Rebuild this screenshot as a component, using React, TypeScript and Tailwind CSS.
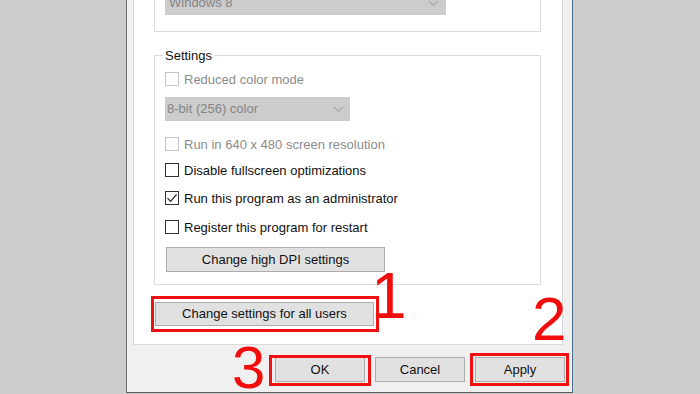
import React from 'react';

type CheckRowProps = {
  label: string;
  checked?: boolean;
  disabled?: boolean;
  className?: string;
};

const CheckRow = ({ label, checked, disabled, className }: CheckRowProps) => (
  <div className={`flex h-[14px] items-center ${className ?? ''}`}>
    <span
      className={`flex h-[14px] w-[14px] shrink-0 items-center justify-center border bg-white ${
        disabled ? 'border-[#c4c4c4]' : 'border-[#333333]'
      }`}
    >
      {checked && (
        <svg width="12" height="12" viewBox="0 0 12 12" fill="none">
          <path d="M1.5 6.2 L4.6 9.3 L10.6 2.4" stroke="#222" strokeWidth="1.2" />
        </svg>
      )}
    </span>
    <span
      className={`ml-[5px] whitespace-nowrap text-[13px] leading-none ${
        disabled ? 'text-[#8c8c8c]' : 'text-[#111]'
      }`}
    >
      {label}
    </span>
  </div>
);

const Chevron = () => (
  <svg width="11" height="7" viewBox="0 0 11 7" fill="none">
    <path d="M1 1 L5.5 5.5 L10 1" stroke="#a8a8a8" strokeWidth="1.1" />
  </svg>
);

const WinButton = ({ label, className }: { label: string; className?: string }) => (
  <div
    className={`flex items-center justify-center border border-[#adadad] bg-[#e1e1e1] text-[13px] text-[#111] ${
      className ?? ''
    }`}
  >
    {label}
  </div>
);

export default function App() {
  return (
    <div
      className="relative h-[394px] w-[700px] overflow-hidden bg-[#cdcdcd]"
      style={{ fontFamily: '"Liberation Sans", Arial, sans-serif' }}
    >
      <div className="ml-[126px] flex h-[393px] w-[447px] flex-col border-b border-l border-r border-b-[#5a5a5a] border-l-[#747474] border-r-[#4f6f8e] bg-[#f0f0f0]">
        {/* tab page */}
        <div className="ml-[6px] flex h-[345px] w-[430px] flex-col border-b border-l border-r border-[#d9d9d9] bg-white">
          {/* compatibility mode group (top cut off) */}
          <div className="ml-[20px] flex h-[32px] w-[387px] flex-col border-b border-l border-r border-[#dcdcdc] pl-[10px]">
            <div className="-mt-[9px] flex h-[24px] w-[281px] shrink-0 items-center justify-between bg-[#cccccc] pl-[4px] pr-[7px]">
              <span className="text-[13px] text-[#858585]">Windows 8</span>
              <Chevron />
            </div>
          </div>

          {/* settings group */}
          <div className="ml-[20px] mt-[23px] flex w-[387px] flex-col border border-[#dcdcdc] pb-[12px] pl-[10px]">
            <span className="-ml-[2px] -mt-[9px] block w-fit bg-white px-[2px] text-[13px] leading-[18px] text-[#111]">
              Settings
            </span>
            <CheckRow label="Reduced color mode" disabled className="mt-[7px]" />
            <div className="mt-[11px] flex h-[24px] w-[185px] items-center justify-between bg-[#cccccc] pl-[2px] pr-[6px]">
              <span className="text-[13px] text-[#858585]">8-bit (256) color</span>
              <Chevron />
            </div>
            <CheckRow label="Run in 640 x 480 screen resolution" disabled className="mt-[16px]" />
            <CheckRow label="Disable fullscreen optimizations" className="mt-[12px]" />
            <CheckRow label="Run this program as an administrator" checked className="mt-[14px]" />
            <CheckRow label="Register this program for restart" className="mt-[15px]" />
            <WinButton label="Change high DPI settings" className="ml-[1px] mt-[13px] h-[25px] w-[219px]" />
          </div>

          <div className="relative ml-[21px] mt-[17px] w-fit">
            <WinButton label="Change settings for all users" className="h-[24px] w-[219px]" />
            <span className="absolute -bottom-[6px] -left-[4px] -right-[5px] -top-[6px] border-[3px] border-[#f01010]" />
          </div>
        </div>

        {/* dialog buttons */}
        <div className="mt-[12px] flex justify-end gap-[10px] pr-[7px]">
          <div className="relative">
            <WinButton label="OK" className="h-[25px] w-[90px]" />
            <span className="absolute -bottom-[4px] -left-[6px] -right-[6px] -top-[2px] border-[3px] border-[#f01010]" />
          </div>
          <WinButton label="Cancel" className="h-[25px] w-[90px]" />
          <div className="relative">
            <WinButton label="Apply" className="h-[25px] w-[90px]" />
            <span className="absolute -bottom-[4px] -left-[5px] -right-[4px] -top-[4px] border-[3px] border-[#f01010]" />
          </div>
        </div>
      </div>

      {/* annotation numbers */}
      <span className="absolute left-[371px] top-[264px] text-[64px] leading-none text-[#f20d0d]">1</span>
      <span className="absolute left-[532px] top-[288px] text-[62px] leading-none text-[#f20d0d]">2</span>
      <span className="absolute left-[232px] top-[338px] text-[60px] leading-none text-[#f20d0d]">3</span>
    </div>
  );
}
